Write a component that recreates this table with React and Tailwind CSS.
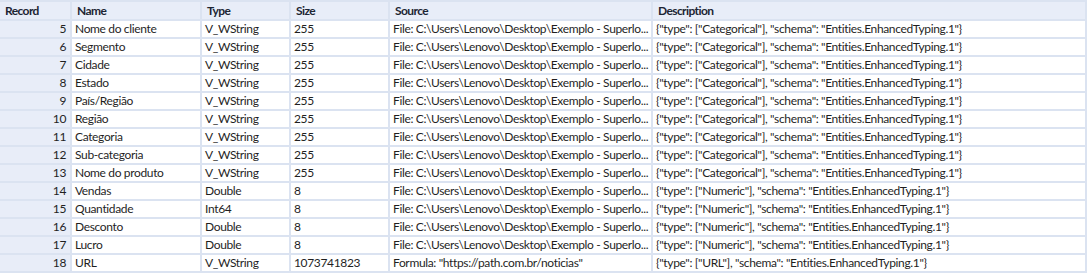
import React from "react";

const cat = '{"type": ["Categorical"], "schema": "Entities.EnhancedTyping.1"}';
const num = '{"type": ["Numeric"], "schema": "Entities.EnhancedTyping.1"}';
const url = '{"type": ["URL"], "schema": "Entities.EnhancedTyping.1"}';
const src = "File: C:\\Users\\Lenovo\\Desktop\\Exemplo - Superlo...";

const rows = [
  [5, "Nome do cliente", "V_WString", "255", src, cat],
  [6, "Segmento", "V_WString", "255", src, cat],
  [7, "Cidade", "V_WString", "255", src, cat],
  [8, "Estado", "V_WString", "255", src, cat],
  [9, "País/Região", "V_WString", "255", src, cat],
  [10, "Região", "V_WString", "255", src, cat],
  [11, "Categoria", "V_WString", "255", src, cat],
  [12, "Sub-categoria", "V_WString", "255", src, cat],
  [13, "Nome do produto", "V_WString", "255", src, cat],
  [14, "Vendas", "Double", "8", src, num],
  [15, "Quantidade", "Int64", "8", src, num],
  [16, "Desconto", "Double", "8", src, num],
  [17, "Lucro", "Double", "8", src, num],
  [18, "URL", "V_WString", "1073741823", 'Formula: "https://path.com.br/noticias"', url],
];

const headers = ["Record", "Name", "Type", "Size", "Source", "Description"];

export default function App() {
  return (
    <div className="w-[1091px] h-[274px] bg-white overflow-hidden" style={{ fontFamily: 'Lato, "Open Sans", sans-serif' }}>
      <div className="w-[1087px] bg-[#dbe3f1] pt-[2px] pb-[2px] pr-[2px]">
        <div className="grid grid-cols-[70px_128px_87px_97px_261px_432px] gap-[2px] text-[12px] tracking-[-0.35px] text-[#1f1f1f] leading-none">
          {headers.map((h) => (
            <div key={h} className="h-[17px] bg-[#e8edf8] px-[5px] flex items-center font-bold text-[#1c2533] tracking-[-0.6px]">
              {h}
            </div>
          ))}
          {rows.map((r) => (
            <React.Fragment key={r[0]}>
              <div className="h-[16px] bg-[#e8edf8] pr-[4px] flex items-center justify-end">{r[0]}</div>
              {r.slice(1).map((c, i) => (
                <div key={i} className="h-[16px] bg-white pl-[3px] flex items-center whitespace-nowrap overflow-hidden">
                  {c}
                </div>
              ))}
            </React.Fragment>
          ))}
        </div>
      </div>
    </div>
  );
}
